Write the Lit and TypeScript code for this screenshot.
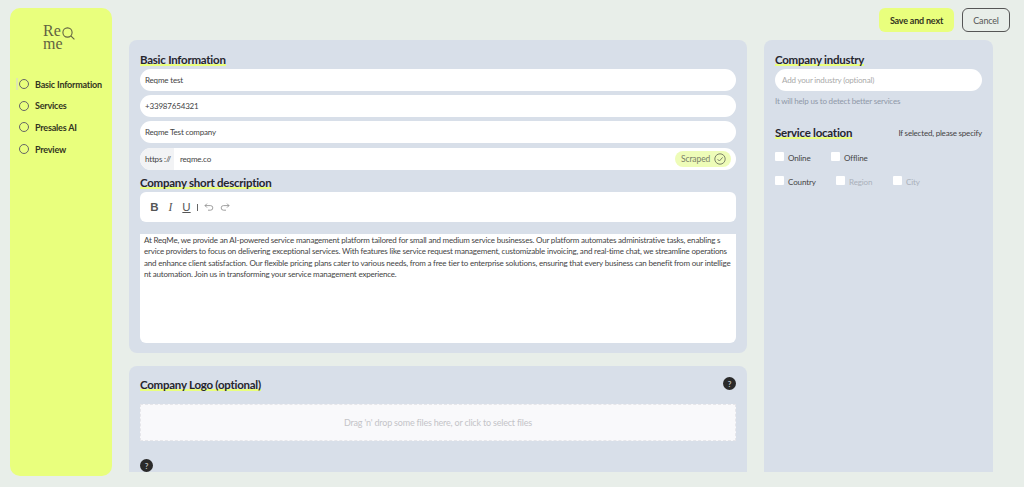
import { LitElement, html, css } from "lit";
import { customElement } from "lit/decorators.js";

const DESC = [
  "At ReqMe, we provide an AI-powered service management platform tailored for small and medium service businesses. Our platform automates administrative tasks, enabling s",
  "ervice providers to focus on delivering exceptional services. With features like service request management, customizable invoicing, and real-time chat, we streamline operations",
  "and enhance client satisfaction. Our flexible pricing plans cater to various needs, from a free tier to enterprise solutions, ensuring that every business can benefit from our intellige",
  "nt automation. Join us in transforming your service management experience.",
];
const NAV = ["Basic Information", "Services", "Presales AI", "Preview"];

@customElement("app-root")
export class AppRoot extends LitElement {
  static styles = css`
    :host { display: block; width: 1024px; height: 487px; overflow: hidden; background: #e8eee9; font-family: Lato, "Open Sans", sans-serif; color: #333; }
    * { box-sizing: border-box; }
    .page { display: flex; height: 487px; padding: 8px 31px 0 10px; }
    .side { width: 102px; height: 468px; background: #e9ff7d; border-radius: 10px; flex: none; padding-top: 16px; }
    .logo { display: flex; height: 52px; padding-left: 33px; font-family: "Liberation Serif", serif; color: #626342; font-size: 16px; line-height: 13px; }
    .logo-text { width: 20px; }
    .logo svg { margin: 3px 0 0 -1px; }
    .nav { display: flex; flex-direction: column; gap: 5.7px; }
    .nav-item { display: flex; align-items: center; height: 16px; padding-left: 9px; gap: 6px; font-size: 9px; letter-spacing: -0.2px; font-weight: 700; color: #33351f; white-space: nowrap; position: relative; }
    .circle { width: 10px; height: 10px; border-radius: 50%; border: 1px solid #666; flex: none; }
    .nav-item.active::before { content: ""; position: absolute; left: 6px; top: 2px; width: 2px; height: 12px; background: #dfe8b0; }
    .main { flex: 1; margin-left: 17px; min-width: 0; display: flex; flex-direction: column; }
    .top { height: 32px; flex: none; display: flex; justify-content: flex-end; gap: 8px; align-items: flex-start; margin-right: -17px; }
    .btn { height: 24px; display: flex; align-items: center; justify-content: center; border-radius: 6px; font-size: 9px; letter-spacing: -0.2px; }
    .save { width: 75px; background: #e9ff7d; font-weight: 700; color: #33351f; }
    .cancel { width: 48px; border: 1px solid #555; color: #555; background: transparent; }
    .cols { flex: none; height: 432px; display: flex; gap: 17px; overflow: hidden; }
    .left { width: 618px; display: flex; flex-direction: column; gap: 13px; flex: none; }
    .panel { background: #d8dfe9; border-radius: 8px; padding: 12px 11px 8px; }
    .basic { height: 313px; flex: none; }
    .right { width: 229px; height: 432px; flex: none; border-radius: 8px 8px 0 0; }
    h2 { margin: 0; font-size: 11.5px; letter-spacing: -0.25px; line-height: 15px; font-weight: 700; color: #26262e; display: block; width: fit-content; background: linear-gradient(#e9ff7d, #e9ff7d) left bottom 1px / 100% 2px no-repeat; white-space: nowrap; }
    .fields { display: flex; flex-direction: column; gap: 4px; margin-top: 2px; }
    .input { height: 22px; background: #fff; border-radius: 11px; display: flex; align-items: center; padding-left: 5px; font-size: 8px; letter-spacing: -0.18px; color: #444; }
    .url { padding-left: 0; overflow: hidden; justify-content: space-between; margin-top: 1px; }
    .proto { width: 34px; height: 100%; background: #f2f3f5; display: flex; align-items: center; padding-left: 5px; flex: none; white-space: pre; }
    .domain { flex: 1; padding-left: 6px; }
    .scraped { display: flex; align-items: center; gap: 4px; height: 16px; width: 56px; margin-right: 5px; padding-left: 6px; border-radius: 8px; background: #eefcb8; color: #7a8068; font-size: 8.5px; letter-spacing: -0.1px; }
    .desc-h { margin-top: 5px; }
    .toolbar { margin-top: 2px; height: 30px; background: #fff; border-radius: 6px; display: flex; align-items: center; padding-left: 10px; color: #555; }
    .toolbar b, .toolbar i, .toolbar u { font-size: 11.5px; width: 9px; text-align: center; line-height: 12px; }
    .toolbar b { font-family: "Liberation Sans", sans-serif; }
    .toolbar i { font-family: "Liberation Serif", serif; margin-left: 7px; }
    .toolbar u { font-family: "Liberation Sans", sans-serif; margin-left: 7px; }
    .sep { width: 1px; height: 7px; background: #666; margin: 0 6px 0 6px; }
    .undo { margin-right: 6px; }
    .editor { margin-top: 12px; height: 109px; background: #fff; border-radius: 0 0 6px 6px; padding: 1px 4px; font-size: 8px; letter-spacing: -0.19px; line-height: 11.35px; color: #444; white-space: nowrap; overflow: hidden; }
    .logo-panel { height: 120px; flex: none; position: relative; padding-top: 11px; }
    .logo-head { display: flex; justify-content: space-between; align-items: flex-start; }
    .help { width: 13px; height: 13px; border-radius: 50%; background: #2a2a2a; color: #bbb; font-size: 8px; font-weight: 700; display: flex; align-items: center; justify-content: center; flex: none; }
    .drop { margin-top: 12px; height: 37px; background: #f9f9fb; border: 1px dashed #e6e6ea; display: flex; align-items: center; justify-content: center; font-size: 9px; letter-spacing: -0.2px; color: #c4c4c8; }
    .help2 { margin-top: 18px; }
    .ind { margin-top: 2px; padding-left: 7px; color: #aaa; }
    .hint { margin-top: 5px; font-size: 8px; letter-spacing: -0.2px; line-height: 11px; color: #8f98a8; }
    .loc-head { display: flex; justify-content: space-between; align-items: center; margin-top: 18px; }
    .spec { font-size: 8px; letter-spacing: -0.2px; color: #444; }
    .checks { display: flex; align-items: flex-start; margin-top: 12px; font-size: 8px; letter-spacing: -0.12px; color: #444; height: 14px; }
    .checks + .checks { margin-top: 10px; }
    .box { width: 9px; height: 9px; background: #fff; border-radius: 1px; margin-right: 4px; flex: none; }
    .lbl { line-height: 12px; }
    .w1 { width: 56px; display: flex; }
    .w2 { width: 61px; display: flex; }
    .w3 { width: 57px; display: flex; }
    .muted { color: #aab0ba; }
  `;

  render() {
    return html`<div class="page">
      <aside class="side">
        <div class="logo">
          <div class="logo-text">Re<br />me</div>
          <svg width="13" height="13" viewBox="0 0 13 13" fill="none" stroke="#626342" stroke-width="1.1"><circle cx="5.5" cy="5.5" r="4.6"/><path d="M8.8 8.8 12.4 12.4"/></svg>
        </div>
        <nav class="nav">
          ${NAV.map((n, i) => html`<div class="nav-item ${i === 0 ? "active" : ""}"><span class="circle"></span>${n}</div>`)}
        </nav>
      </aside>
      <div class="main">
        <div class="top">
          <div class="btn save">Save and next</div>
          <div class="btn cancel">Cancel</div>
        </div>
        <div class="cols">
          <div class="left">
            <section class="panel basic">
              <h2>Basic Information</h2>
              <div class="fields">
                <div class="input">Reqme test</div>
                <div class="input">+33987654321</div>
                <div class="input">Reqme Test company</div>
                <div class="input url">
                  <span class="proto">https ://</span>
                  <span class="domain">reqme.co</span>
                  <span class="scraped">Scraped
                    <svg width="12" height="12" viewBox="0 0 12 12" fill="none" stroke="#6f7560" stroke-width="0.9"><circle cx="6" cy="6" r="5.2"/><path d="M3.6 6.2 5.4 8 8.6 4.4"/></svg>
                  </span>
                </div>
              </div>
              <h2 class="desc-h">Company short description</h2>
              <div class="toolbar">
                <b>B</b><i>I</i><u>U</u><span class="sep"></span>
                <svg class="undo" width="10" height="8" viewBox="0 0 10 8" fill="none" stroke="#888" stroke-width="0.8"><path d="M3 .6 1 2.6l2 2M1 2.6h5.5a2.3 2.3 0 0 1 0 4.6H4"/></svg>
                <svg width="10" height="8" viewBox="0 0 10 8" fill="none" stroke="#888" stroke-width="0.8"><path d="M7 .6l2 2-2 2M9 2.6H3.5a2.3 2.3 0 0 0 0 4.6H6"/></svg>
              </div>
              <div class="editor">${DESC.map((l) => html`<div>${l}</div>`)}</div>
            </section>
            <section class="panel logo-panel">
              <div class="logo-head"><h2>Company Logo (optional)</h2><span class="help">?</span></div>
              <div class="drop">Drag 'n' drop some files here, or click to select files</div>
              <div class="help help2">?</div>
            </section>
          </div>
          <section class="panel right">
            <h2>Company industry</h2>
            <div class="input ind">Add your industry (optional)</div>
            <div class="hint">It will help us to detect better services</div>
            <div class="loc-head"><h2>Service location</h2><span class="spec">If selected, please specify</span></div>
            <div class="checks">
              <span class="w1"><span class="box"></span><span class="lbl">Online</span></span>
              <span class="w1"><span class="box"></span><span class="lbl">Offline</span></span>
            </div>
            <div class="checks">
              <span class="w2"><span class="box"></span><span class="lbl">Country</span></span>
              <span class="w3"><span class="box"></span><span class="lbl muted">Region</span></span>
              <span class="w3"><span class="box"></span><span class="lbl muted">City</span></span>
            </div>
          </section>
        </div>
      </div>
    </div>`;
  }
}
